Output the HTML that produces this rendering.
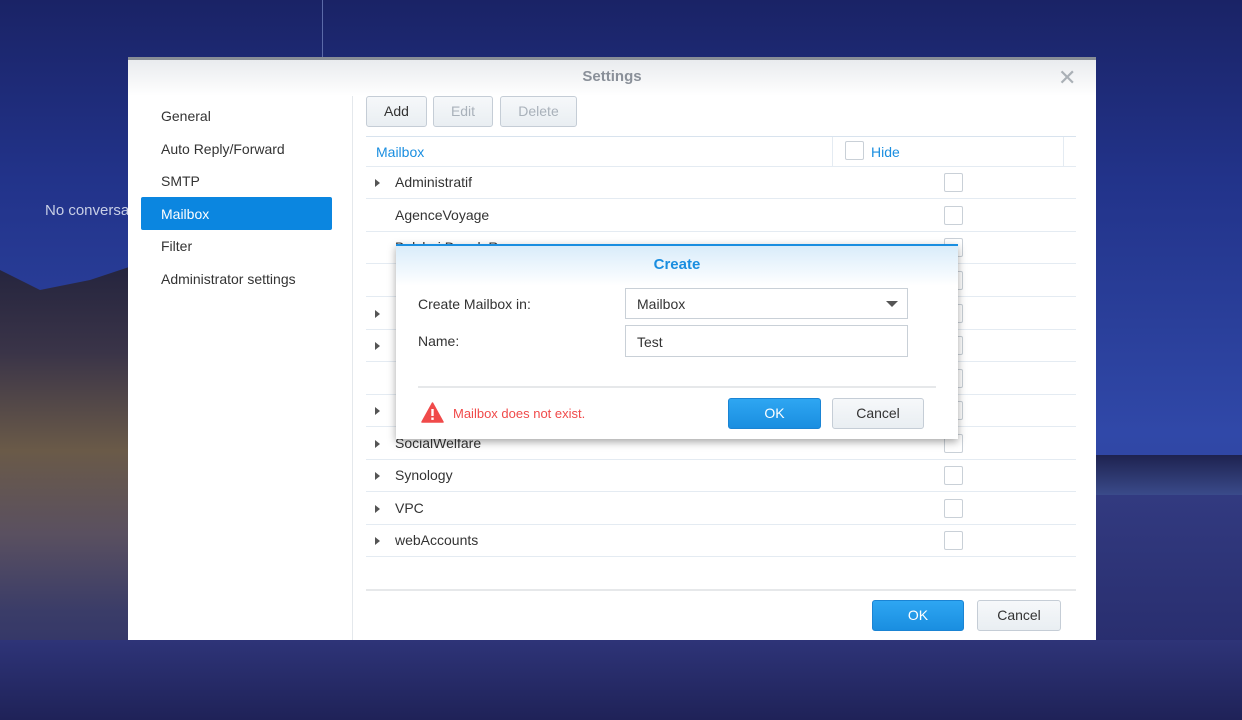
<!DOCTYPE html>
<html><head><meta charset="utf-8"><style>
*{box-sizing:border-box;margin:0;padding:0}
body{width:1242px;height:720px;overflow:hidden;position:relative;font-family:"Liberation Sans",sans-serif;font-size:14px;color:#333;
background:linear-gradient(180deg,#1a2366 0%,#22338a 25%,#2a3f9a 45%,#3048a8 60%,#2c3a88 100%);}
.a{position:absolute}
.btn{position:absolute;border:1px solid #c5cdd6;border-radius:3px;background:linear-gradient(#f6f8fa,#e9eef2);text-align:center;font-size:14px;color:#333}
.blue{background:linear-gradient(#2ea6f2,#1a8ee0);border-color:#1a84d4;color:#fff}
.cb{position:absolute;width:19px;height:19px;border:1px solid #c9d0d7;background:#fff;border-radius:2px}
.row{position:absolute;left:366px;width:710px;height:33px;border-bottom:1px solid #e4ebf2}
.row span{position:absolute;left:29px;top:8px}
.tri{position:absolute;left:9px;top:13px;width:0;height:0;border-left:5px solid #555;border-top:4px solid transparent;border-bottom:4px solid transparent}
</style></head><body>
<div class="a" style="left:0;top:230px;width:330px;height:490px;background:linear-gradient(180deg,#1c1e3a 0%,#3a3448 25%,#6a5a48 45%,#5a5060 62%,#3a3c68 78%,#2a2e66 100%);clip-path:polygon(0 40px,40px 60px,90px 50px,150px 30px,200px 0,260px 30px,330px 50px,330px 490px,0 490px)"></div>
<div class="a" style="left:1096px;top:455px;width:146px;height:40px;background:linear-gradient(#1e2250,#3a4a8a)"></div>
<div class="a" style="left:1096px;top:495px;width:146px;height:225px;background:linear-gradient(#323a80,#242866)"></div>
<div class="a" style="left:0;top:640px;width:1242px;height:80px;background:linear-gradient(180deg,#2e3478,#1f2258)"></div>
<div class="a" style="left:322px;top:0;width:1px;height:57px;background:#5b6aa8"></div>
<div class="a" style="left:45px;top:202px;color:#c8cfe6;font-size:15px">No conversa</div>

<div class="a" style="left:128px;top:57px;width:968px;height:583px;background:#fff;border-top:3px solid #888e96"></div>
<div class="a" style="left:128px;top:60px;width:968px;height:36px;background:linear-gradient(#e9ebee,#fff)"></div>
<div class="a" style="left:128px;top:68px;width:968px;text-align:center;font-weight:bold;color:#8a9099;font-size:15px">Settings</div>
<div class="a" style="left:1058px;top:68px;font-size:22px;color:#aab0b6;line-height:20px">✕</div>

<div class="a" style="left:352px;top:96px;width:1px;height:544px;background:#e4e8ec"></div>
<div class="a" style="left:161px;top:108px">General</div>
<div class="a" style="left:161px;top:141px">Auto Reply/Forward</div>
<div class="a" style="left:161px;top:173px">SMTP</div>
<div class="a" style="left:141px;top:197px;width:191px;height:33px;background:#0b86e0;border-radius:2px"></div>
<div class="a" style="left:161px;top:206px;color:#fff">Mailbox</div>
<div class="a" style="left:161px;top:238px">Filter</div>
<div class="a" style="left:161px;top:271px">Administrator settings</div>

<div class="btn" style="left:366px;top:96px;width:61px;height:31px;line-height:29px">Add</div>
<div class="btn" style="left:433px;top:96px;width:60px;height:31px;line-height:29px;color:#a9b1ba">Edit</div>
<div class="btn" style="left:500px;top:96px;width:77px;height:31px;line-height:29px;color:#a9b1ba">Delete</div>

<div class="a" style="left:366px;top:136px;width:710px;height:31px;border-top:1px solid #d8e3ee;border-bottom:1px solid #e4ebf2"></div>
<div class="a" style="left:832px;top:137px;width:1px;height:29px;background:#e4ebf2"></div>
<div class="a" style="left:1063px;top:137px;width:1px;height:29px;background:#e4ebf2"></div>
<div class="a" style="left:376px;top:144px;color:#1a8ee0">Mailbox</div>
<div class="cb" style="left:845px;top:141px"></div>
<div class="a" style="left:871px;top:144px;color:#1a8ee0">Hide</div>

<div class="row" style="top:166px"><i class="tri"></i><span>Administratif</span><i class="cb" style="left:578px;top:7px"></i></div>
<div class="row" style="top:199px"><span>AgenceVoyage</span><i class="cb" style="left:578px;top:7px"></i></div>
<div class="row" style="top:231px"><span>Bolchoi Dansk Ru</span><i class="cb" style="left:578px;top:7px"></i></div>
<div class="row" style="top:264px"><i class="cb" style="left:578px;top:7px"></i></div>
<div class="row" style="top:297px"><i class="tri"></i><i class="cb" style="left:578px;top:7px"></i></div>
<div class="row" style="top:329px"><i class="tri"></i><i class="cb" style="left:578px;top:7px"></i></div>
<div class="row" style="top:362px"><i class="cb" style="left:578px;top:7px"></i></div>
<div class="row" style="top:394px"><i class="tri"></i><i class="cb" style="left:578px;top:7px"></i></div>
<div class="row" style="top:427px"><i class="tri"></i><span>SocialWelfare</span><i class="cb" style="left:578px;top:7px"></i></div>
<div class="row" style="top:459px"><i class="tri"></i><span>Synology</span><i class="cb" style="left:578px;top:7px"></i></div>
<div class="row" style="top:492px"><i class="tri"></i><span>VPC</span><i class="cb" style="left:578px;top:7px"></i></div>
<div class="row" style="top:524px"><i class="tri"></i><span>webAccounts</span><i class="cb" style="left:578px;top:7px"></i></div>

<div class="a" style="left:366px;top:589px;width:710px;height:2px;background:#e6e8ea"></div>
<div class="btn blue" style="left:872px;top:600px;width:92px;height:31px;line-height:29px">OK</div>
<div class="btn" style="left:977px;top:600px;width:84px;height:31px;line-height:29px">Cancel</div>

<div class="a" style="left:396px;top:244px;width:562px;height:195px;background:#fff;border-top:2px solid #1a8ee0;box-shadow:0 3px 8px rgba(0,0,0,.35)"></div>
<div class="a" style="left:396px;top:246px;width:562px;height:40px;background:linear-gradient(#d9ecfa,#fff)"></div>
<div class="a" style="left:396px;top:256px;width:562px;text-align:center;font-weight:bold;color:#1a8ee0;font-size:15px">Create</div>
<div class="a" style="left:418px;top:296px">Create Mailbox in:</div>
<div class="a" style="left:418px;top:333px">Name:</div>
<div class="a" style="left:625px;top:288px;width:283px;height:31px;border:1px solid #c9d0d7;padding:7px 11px">Mailbox</div>
<div class="a" style="left:886px;top:301px;width:0;height:0;border-top:6px solid #555;border-left:6px solid transparent;border-right:6px solid transparent"></div>
<div class="a" style="left:625px;top:325px;width:283px;height:32px;border:1px solid #c9d0d7;padding:8px 11px">Test</div>
<div class="a" style="left:418px;top:386px;width:518px;height:2px;background:#e6e8ea"></div>
<svg class="a" style="left:421px;top:402px" width="23" height="21" viewBox="0 0 23 21"><path d="M11.5 1 L22 20 L1 20 Z" fill="#f04a4a" stroke="#f04a4a" stroke-linejoin="round" stroke-width="1.5"/><rect x="10.3" y="7" width="2.4" height="7" fill="#fff"/><rect x="10.3" y="15.5" width="2.4" height="2.4" fill="#fff"/></svg>
<div class="a" style="left:453px;top:406px;color:#f04a4a;font-size:13px">Mailbox does not exist.</div>
<div class="btn blue" style="left:728px;top:398px;width:93px;height:31px;line-height:29px">OK</div>
<div class="btn" style="left:832px;top:398px;width:92px;height:31px;line-height:29px">Cancel</div>
</body></html>
